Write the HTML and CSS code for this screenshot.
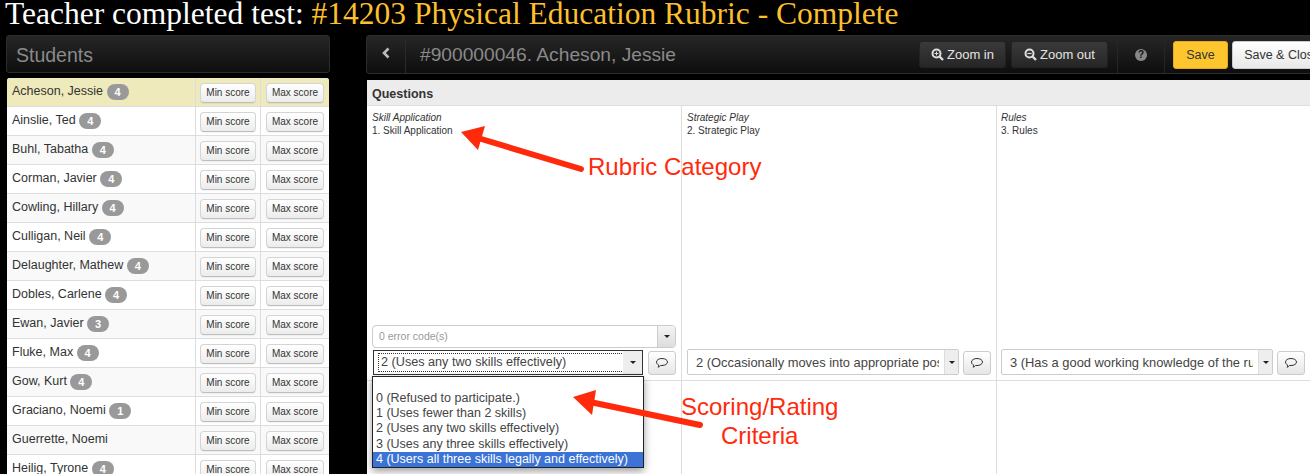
FILE: index.html
```html
<!DOCTYPE html>
<html lang="en">
<head>
<meta charset="utf-8">
<title>Teacher completed test</title>
<link rel="stylesheet" href="styles.css">
</head>
<body>
<div class="page">
  <h1 class="title">Teacher completed test: <span class="title-accent">#14203 Physical Education Rubric - Complete</span></h1>
  <div class="columns">
    <aside class="side">
      <div class="bar side-bar">Students</div>
      <div class="students">
        <div class="row selected"><div class="name">Acheson, Jessie <span class="badge">4</span></div><div class="cell"><button class="btn">Min score</button></div><div class="cell wide"><button class="btn">Max score</button></div></div>
        <div class="row"><div class="name">Ainslie, Ted <span class="badge">4</span></div><div class="cell"><button class="btn">Min score</button></div><div class="cell wide"><button class="btn">Max score</button></div></div>
        <div class="row"><div class="name">Buhl, Tabatha <span class="badge">4</span></div><div class="cell"><button class="btn">Min score</button></div><div class="cell wide"><button class="btn">Max score</button></div></div>
        <div class="row"><div class="name">Corman, Javier <span class="badge">4</span></div><div class="cell"><button class="btn">Min score</button></div><div class="cell wide"><button class="btn">Max score</button></div></div>
        <div class="row"><div class="name">Cowling, Hillary <span class="badge">4</span></div><div class="cell"><button class="btn">Min score</button></div><div class="cell wide"><button class="btn">Max score</button></div></div>
        <div class="row"><div class="name">Culligan, Neil <span class="badge">4</span></div><div class="cell"><button class="btn">Min score</button></div><div class="cell wide"><button class="btn">Max score</button></div></div>
        <div class="row"><div class="name">Delaughter, Mathew <span class="badge">4</span></div><div class="cell"><button class="btn">Min score</button></div><div class="cell wide"><button class="btn">Max score</button></div></div>
        <div class="row"><div class="name">Dobles, Carlene <span class="badge">4</span></div><div class="cell"><button class="btn">Min score</button></div><div class="cell wide"><button class="btn">Max score</button></div></div>
        <div class="row"><div class="name">Ewan, Javier <span class="badge">3</span></div><div class="cell"><button class="btn">Min score</button></div><div class="cell wide"><button class="btn">Max score</button></div></div>
        <div class="row"><div class="name">Fluke, Max <span class="badge">4</span></div><div class="cell"><button class="btn">Min score</button></div><div class="cell wide"><button class="btn">Max score</button></div></div>
        <div class="row"><div class="name">Gow, Kurt <span class="badge">4</span></div><div class="cell"><button class="btn">Min score</button></div><div class="cell wide"><button class="btn">Max score</button></div></div>
        <div class="row"><div class="name">Graciano, Noemi <span class="badge">1</span></div><div class="cell"><button class="btn">Min score</button></div><div class="cell wide"><button class="btn">Max score</button></div></div>
        <div class="row"><div class="name">Guerrette, Noemi</div><div class="cell"><button class="btn">Min score</button></div><div class="cell wide"><button class="btn">Max score</button></div></div>
        <div class="row"><div class="name">Heilig, Tyrone <span class="badge">4</span></div><div class="cell"><button class="btn">Min score</button></div><div class="cell wide"><button class="btn">Max score</button></div></div>
      </div>
    </aside>
    <main class="main">
      <div class="bar main-bar">
        <div class="back"><svg width="10" height="12" viewBox="0 0 10 12"><path d="M7.5 1.500 L3 6 L7.500 10.500" fill="none" stroke="#bbb" stroke-width="2.600"/></svg></div>
        <div class="student-title">#900000046. Acheson, Jessie</div>
        <div class="tools">
          <button class="dark-btn"><svg width="13" height="13" viewBox="0 0 13 13"><circle cx="5.500" cy="5.500" r="4" fill="none" stroke="#ddd" stroke-width="2"/><path d="M8.500 8.500 L12 12" stroke="#ddd" stroke-width="2.400"/><path d="M3.600 5.500 H7.400 M5.500 3.600 V7.400" stroke="#ddd" stroke-width="1"/></svg>Zoom in</button>
          <button class="dark-btn"><svg width="13" height="13" viewBox="0 0 13 13"><circle cx="5.500" cy="5.500" r="4" fill="none" stroke="#ddd" stroke-width="2"/><path d="M8.500 8.500 L12 12" stroke="#ddd" stroke-width="2.400"/><path d="M3.400 5.500 H7.600" stroke="#ddd" stroke-width="1.200"/></svg>Zoom out</button>
          <div class="help"><span class="help-dot">?</span></div>
          <button class="save">Save</button>
          <button class="save-close">Save &amp; Close</button>
        </div>
      </div>
      <section class="panel">
        <div class="panel-head">Questions</div>
        <div class="questions">
          <div class="question">
            <div class="q-cat">Skill Application</div>
            <div class="q-name">1. Skill Application</div>
            <div class="q-spacer"></div>
            <div class="errors"><span class="errors-text">0 error code(s)</span><span class="errors-btn"><i class="caret"></i></span></div>
            <div class="score-line">
              <div class="select focused"><span class="select-text">2 (Uses any two skills effectively)</span><span class="select-arrow"><i class="caret"></i></span></div>
              <button class="comment"><svg width="14" height="12" viewBox="0 0 14 12"><path d="M7 1.500 C10.200 1.500 12.500 3 12.500 5 C12.500 7 10.200 8.500 7 8.500 L5.600 8.500 C5 9.400 4 10 3 10.200 C3.600 9.500 3.800 8.800 3.700 8 C2.300 7.400 1.500 6.300 1.500 5 C1.500 3 3.800 1.500 7 1.500 Z" fill="none" stroke="#333" stroke-width="1"/></svg></button>
            </div>
            <ul class="options">
              <li class="option blank">&nbsp;</li>
              <li class="option">0 (Refused to participate.)</li>
              <li class="option">1 (Uses fewer than 2 skills)</li>
              <li class="option">2 (Uses any two skills effectively)</li>
              <li class="option">3 (Uses any three skills effectively)</li>
              <li class="option active">4 (Users all three skills legally and effectively)</li>
            </ul>
          </div>
          <div class="question">
            <div class="q-cat">Strategic Play</div>
            <div class="q-name">2. Strategic Play</div>
            <div class="q-spacer"></div>
            <div class="score-line">
              <div class="select"><span class="select-text">2 (Occasionally moves into appropriate positions)</span><span class="select-arrow"><i class="caret"></i></span></div>
              <button class="comment"><svg width="14" height="12" viewBox="0 0 14 12"><path d="M7 1.500 C10.200 1.500 12.500 3 12.500 5 C12.500 7 10.200 8.500 7 8.500 L5.600 8.500 C5 9.400 4 10 3 10.200 C3.600 9.500 3.800 8.800 3.700 8 C2.300 7.400 1.500 6.300 1.500 5 C1.500 3 3.800 1.500 7 1.500 Z" fill="none" stroke="#333" stroke-width="1"/></svg></button>
            </div>
          </div>
          <div class="question">
            <div class="q-cat">Rules</div>
            <div class="q-name">3. Rules</div>
            <div class="q-spacer"></div>
            <div class="score-line">
              <div class="select"><span class="select-text">3 (Has a good working knowledge of the rules)</span><span class="select-arrow"><i class="caret"></i></span></div>
              <button class="comment"><svg width="14" height="12" viewBox="0 0 14 12"><path d="M7 1.500 C10.200 1.500 12.500 3 12.500 5 C12.500 7 10.200 8.500 7 8.500 L5.600 8.500 C5 9.400 4 10 3 10.200 C3.600 9.500 3.800 8.800 3.700 8 C2.300 7.400 1.500 6.300 1.500 5 C1.500 3 3.800 1.500 7 1.500 Z" fill="none" stroke="#333" stroke-width="1"/></svg></button>
            </div>
          </div>
        </div>
        <div class="dividers"><span></span><span></span><span></span></div>
      </section>
    </main>
  </div>
  <svg class="arrows" width="1310" height="474" viewBox="0 0 1310 474">
    <path d="M581 169 L478 138" stroke="#ff2a0c" stroke-width="6" stroke-linecap="round"/>
    <path d="M461 132 L485 126 L478 150 Z" fill="#ff2a0c"/>
    <path d="M700 425 L590 402" stroke="#ff2a0c" stroke-width="6" stroke-linecap="round"/>
    <path d="M573 397 L596 390 L592 415 Z" fill="#ff2a0c"/>
  </svg>
  <div class="note note-rubric">Rubric Category</div>
  <div class="note note-scoring">Scoring/Rating<br>Criteria</div>
</div>
</body>
</html>
```
FILE: styles.css
```css
* { box-sizing: border-box; }
html, body { margin: 0; padding: 0; height: 100%; overflow: hidden; background: #000; }
body { font-family: "Liberation Sans", Arial, sans-serif; color: #333; }
button { font-family: inherit; margin: 0; cursor: default; }
ul { list-style: none; margin: 0; padding: 0; }

.page { position: relative; width: 1310px; height: 474px; overflow: hidden; }

.title {
  margin: 0; height: 35px; padding-left: 5px;
  font-family: "Liberation Serif", serif; font-weight: 400; font-size: 31.500px; line-height: 28px;
  color: #fff; white-space: nowrap;
}
.title-accent { color: #fdbf2d; }

.columns { display: flex; padding-left: 6px; gap: 36px; }
.side { width: 324px; flex: none; }
.main { width: 970px; flex: none; }

.bar {
  background: linear-gradient(#262626, #0e0e0e);
  border: 1px solid #2c2c2c; border-radius: 3px;
}
.side-bar { height: 38px; padding-left: 9px; font-size: 19.500px; line-height: 38px; color: #8a8a8a; }

.students { margin-top: 5px; margin-left: 1px; width: 322px; background: #fff; border-radius: 3px 3px 0 0; overflow: hidden; }
.row { display: flex; height: 29px; border-bottom: 1px solid #ddd; background: #fff; }
.row:nth-child(odd) { background: #f9f9f9; }
.row.selected { background: #eeeabb; }
.name { flex: 1; padding: 5px 0 0 5px; font-size: 12.500px; line-height: 16px; color: #333; white-space: nowrap; }
.badge {
  display: inline-block; margin-left: 0; padding: 0 8px; height: 16px; border-radius: 9px;
  background: #999; color: #fff; font-size: 11px; font-weight: 700; line-height: 16px; vertical-align: -1px;
}
.cell { width: 65px; flex: none; border-left: 1px solid #ddd; padding: 5px 0 0 4px; }
.cell.wide { width: 69px; padding-left: 5px; }
.btn {
  display: block; width: 56px; height: 20px; padding: 0;
  border: 1px solid #d4d4d4; border-bottom-color: #bdbdbd; border-radius: 4px;
  background: linear-gradient(#fff, #ececec); box-shadow: inset 0 1px 0 #fff, 0 1px 1px rgba(0,0,0,.05);
  font-size: 10px; line-height: 18px; color: #333; white-space: nowrap;
}
.wide .btn { width: 58px; }

.main-bar { display: flex; align-items: center; height: 39px; }
.back { width: 39px; height: 100%; flex: none; display: flex; align-items: center; justify-content: center; border-right: 1px solid #2a2a2a; padding-bottom: 3px; }
.student-title { margin-left: 14px; font-size: 19.200px; color: #8a8a8a; white-space: nowrap; width: 499px; flex: none; }
.tools { display: flex; align-items: center; height: 100%; }
.dark-btn {
  display: flex; align-items: center; justify-content: center; gap: 3px;
  height: 27px; margin-right: 5px; padding: 0;
  background: linear-gradient(#3a3a3a, #262626); border: 1px solid #222; border-radius: 3px;
  color: #e4e4e4; font-size: 13px; white-space: nowrap;
}
.dark-btn:nth-child(1) { width: 87px; }
.dark-btn:nth-child(2) { width: 97px; margin-right: 9px; }
.help { width: 48px; height: 100%; display: flex; align-items: center; justify-content: center; border-left: 1px solid #262626; border-right: 1px solid #262626; margin-right: 8px; flex: none; }
.help-dot { display: block; width: 12px; height: 12px; border-radius: 50%; background: #888; color: #111; font-size: 10px; font-weight: 700; line-height: 12px; text-align: center; }
.save, .save-close { height: 28px; padding: 0; border-radius: 3px; font-size: 12.500px; color: #333; white-space: nowrap; }
.save { width: 55px; background: #fdc62f; border: 1px solid #e4ac1c; margin-right: 4px; }
.save-close { width: 100px; background: linear-gradient(#fff, #e8e8e8); border: 1px solid #ccc; }

.panel { position: relative; margin-top: 6px; margin-left: 1px; height: 394px; background: #fff; border-radius: 3px 3px 0 0; overflow: visible; }
.panel-head { height: 26px; padding-left: 5px; background: #ececec; border-bottom: 1px solid #ddd; font-size: 12.500px; font-weight: 700; line-height: 28px; color: #333; }
.questions { display: flex; height: 275px; border-bottom: 1px solid #ddd; }
.question { position: relative; flex: none; width: 315px; height: 100%; padding: 5px 5px 0 5px; border-right: 1px solid #ddd; display: flex; flex-direction: column; }
.question:first-child { padding-left: 5px; }
.question:last-child { padding-left: 4px; }
.q-cat { font-size: 10px; font-style: italic; line-height: 13px; color: #333; }
.q-name { font-size: 10px; line-height: 13px; color: #333; }
.q-spacer { flex: 1; }

.errors { display: flex; align-items: center; height: 23px; width: 304px; border: 1px solid #ccc; border-radius: 4px; background: #fff; margin-bottom: 1px; }
.errors-text { flex: 1; padding: 0 0 2px 6px; font-size: 10.500px; color: #999; }
.errors-btn { width: 18px; height: 21px; display: flex; align-items: center; justify-content: center; background: linear-gradient(#f4f4f4, #ddd); border-left: 1px solid #ccc; border-radius: 0 3px 3px 0; }

.score-line { display: flex; align-items: flex-end; gap: 4px; height: 26px; margin-bottom: 5px; }
.select { flex: none; width: 272px; height: 26px; display: flex; align-items: center; background: #fff; border: 1px solid #ccc; border-radius: 2px; }
.select.focused { border-color: #333; margin-left: 1px; width: 270px; height: 25px; border-radius: 0; }
.focused + .comment { margin-left: 1px; }
.select-text { flex: 1; min-width: 0; margin-left: 8px; margin-right: 5px; font-size: 12.900px; color: #444; white-space: nowrap; overflow: hidden; }
.focused .select-text { margin-left: 5px; margin-right: 0; padding-left: 2px; outline: 1px dotted #333; font-size: 12.650px; line-height: 17px; }
.select-arrow { flex: none; width: 14px; height: 100%; display: flex; align-items: center; justify-content: center; background: #eee; border-left: 1px solid #ddd; }
.focused .select-arrow { width: 19px; background: #eee; border: 0; }
.caret { display: block; width: 0; height: 0; border-left: 3px solid transparent; border-right: 3px solid transparent; border-top: 3px solid #222; }
.comment { flex: none; width: 28px; height: 24px; padding: 0; display: flex; align-items: center; justify-content: center; background: linear-gradient(#fff, #e6e6e6); border: 1px solid #ccc; border-radius: 3px; }

.options {
  position: absolute; left: 5px; top: 270px; width: 272px; height: 92px; padding-top: 0;
  background: #fff; border: 1px solid #222; box-shadow: 0 3px 8px rgba(0,0,0,.4); z-index: 2;
}
.option { height: 15.400px; padding-left: 3px; font-size: 12.500px; line-height: 15.400px; color: #444; white-space: nowrap; }
.option.blank { height: 13.500px; }
.option.active { background: #3b73d6; color: #fff; padding-left: 3px; }

.dividers { display: flex; height: 93px; }
.dividers span { flex: none; width: 315px; border-right: 1px solid #ddd; }

.arrows { position: absolute; left: 0; top: 0; pointer-events: none; z-index: 3; }
.note { position: absolute; z-index: 3; color: #ff2a0c; font-size: 24px; line-height: 29px; text-align: center; white-space: nowrap; }
.note-rubric { left: 588px; top: 152px; }
.note-scoring { left: 681px; top: 392px; }
```
